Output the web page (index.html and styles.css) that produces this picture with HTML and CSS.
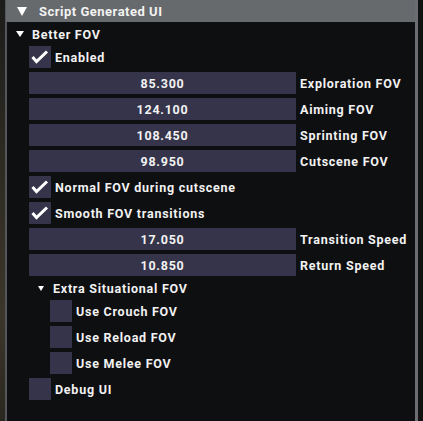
FILE: index.html
```html
<!DOCTYPE html>
<html>
<head>
<meta charset="utf-8">
<link rel="stylesheet" href="styles.css">
</head>
<body>
<div class="scene">
  <div class="window">
    <div class="titlebar"><span class="tri tri-title"></span><span class="title-text">Script Generated UI</span></div>
    <div class="content">
      <div class="tree tree-top"><span class="tri tri-node"></span>Better FOV</div>
      <div class="group">
        <div class="check"><span class="box"><svg viewBox="0 0 22 22" width="22" height="22"><polyline points="3.5,11 7.5,15.5 18,5.5" fill="none" stroke="#fff" stroke-width="3"/></svg></span>Enabled</div>
        <div class="slider"><div class="frame">85.300</div><span class="label">Exploration FOV</span></div>
        <div class="slider"><div class="frame">124.100</div><span class="label">Aiming FOV</span></div>
        <div class="slider"><div class="frame">108.450</div><span class="label">Sprinting FOV</span></div>
        <div class="slider"><div class="frame">98.950</div><span class="label">Cutscene FOV</span></div>
        <div class="check"><span class="box"><svg viewBox="0 0 22 22" width="22" height="22"><polyline points="3.5,11 7.5,15.5 18,5.5" fill="none" stroke="#fff" stroke-width="3"/></svg></span>Normal FOV during cutscene</div>
        <div class="check"><span class="box"><svg viewBox="0 0 22 22" width="22" height="22"><polyline points="3.5,11 7.5,15.5 18,5.5" fill="none" stroke="#fff" stroke-width="3"/></svg></span>Smooth FOV transitions</div>
        <div class="slider"><div class="frame">17.050</div><span class="label">Transition Speed</span></div>
        <div class="slider"><div class="frame">10.850</div><span class="label">Return Speed</span></div>
        <div class="tree tree-sub"><span class="tri tri-small"></span>Extra Situational FOV</div>
        <div class="subgroup">
          <div class="check"><span class="box"></span>Use Crouch FOV</div>
          <div class="check"><span class="box"></span>Use Reload FOV</div>
          <div class="check"><span class="box"></span>Use Melee FOV</div>
        </div>
        <div class="check"><span class="box"></span>Debug UI</div>
      </div>
    </div>
  </div>
</div>
</body>
</html>
```

FILE: styles.css
```css
html, body {
  margin: 0;
  padding: 0;
  width: 423px;
  height: 421px;
  overflow: hidden;
}
body {
  background: linear-gradient(180deg, #1c1c1a 0%, #2e2b22 40%, #3b3629 75%, #2a2720 100%);
  font-family: "Roboto", "Liberation Sans", sans-serif;
  font-weight: 700;
  color: #f2f2f2;
}
.scene {
  display: flex;
  height: 421px;
  padding-left: 5px;
  background: linear-gradient(90deg, transparent 0, transparent 418px, #121212 418px);
}
.window {
  width: 408px;
  height: 421px;
  border-left: 2px solid #55555c;
  border-right: 3px solid #6c6c74;
  background: #0e0f11;
  display: flex;
  flex-direction: column;
}
.titlebar {
  height: 22px;
  background: #676a6d;
  display: flex;
  align-items: center;
  font-size: 13px;
  letter-spacing: 0.5px;
  margin-left: -1px;
}
.tri {
  display: inline-block;
  width: 0;
  height: 0;
  border-style: solid;
  border-color: #fff transparent transparent transparent;
}
.tri-title {
  border-width: 9px 5px 0 5px;
  margin-left: 11px;
  margin-right: 12px;
}
.tri-node {
  border-width: 6px 4px 0 4px;
  margin-left: 1px;
  margin-right: 8px;
}
.tri-small {
  border-width: 5px 3px 0 3px;
  margin-left: 9px;
  margin-right: 9px;
}
.content {
  padding: 4px 0 0 8px;
  display: flex;
  flex-direction: column;
  gap: 4px;
  font-size: 12.5px;
  letter-spacing: 0.75px;
}
.tree {
  height: 16px;
  display: flex;
  align-items: center;
}
.group {
  padding-left: 14px;
  display: flex;
  flex-direction: column;
  gap: 4px;
}
.subgroup {
  padding-left: 21px;
  display: flex;
  flex-direction: column;
  gap: 4px;
}
.check {
  height: 22px;
  display: flex;
  align-items: center;
}
.box {
  width: 22px;
  height: 22px;
  background: #35344a;
  margin-right: 4px;
  display: block;
}
.box svg {
  display: block;
}
.slider {
  height: 22px;
  display: flex;
  align-items: center;
}
.frame {
  width: 267px;
  height: 22px;
  background: #35344a;
  display: flex;
  align-items: center;
  justify-content: center;
  margin-right: 4px;
}
```
